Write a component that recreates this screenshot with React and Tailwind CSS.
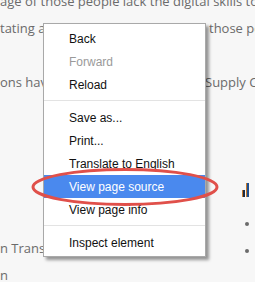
export default function App() {
  const item = "h-[23px] flex items-center pl-[25px] whitespace-nowrap";
  return (
    <div className="relative w-[255px] h-[282px] overflow-hidden bg-[#f7f7f7]">
      <div className="-mt-[12px] text-[13px] leading-[27px] text-[#6b6b6b] font-['Open_Sans',sans-serif] whitespace-nowrap">
        <div className="h-[27px] overflow-hidden">age of those people lack the digital skills to</div>
        <div className="h-[27px] flex overflow-hidden">
          <span className="w-[209px] shrink-0 overflow-hidden">tating a major shift in how</span>
          <span>those people</span>
        </div>
        <div className="h-[27px]" />
        <div className="h-[27px] flex overflow-hidden">
          <span className="w-[205px] shrink-0 overflow-hidden">ons have been given to</span>
          <span>Supply Chain</span>
        </div>
        <div className="flex">
          <div className="w-[241px] shrink-0 overflow-hidden pt-[139px]">
            <div className="h-[27px]">n Translation services</div>
            <div className="h-[27px]">n</div>
          </div>
          <div className="flex-1 flex flex-col">
            <svg className="mt-[87px]" width="10" height="14" viewBox="0 0 10 14">
              <rect x="1" y="7" width="3" height="7" fill="#1b2a44" />
              <rect x="1" y="7" width="1" height="7" fill="#c77a2a" />
              <rect x="5" y="0" width="3" height="14" fill="#1f4f8f" />
              <rect x="5" y="0" width="1" height="14" fill="#c77a2a" />
            </svg>
            <div className="mt-[13px] h-[27px] flex items-center">
              <div className="ml-[4px] w-[4px] h-[4px] rounded-full bg-[#6b6b6b]" />
            </div>
            <div className="h-[27px] flex items-center">
              <div className="ml-[4px] w-[4px] h-[4px] rounded-full bg-[#6b6b6b]" />
            </div>
          </div>
        </div>
      </div>

      <div className="absolute left-[43px] top-[23px] w-[163px] border border-[#a9a9a9] bg-white pt-[3px] pb-[2px] shadow-[3px_3px_3px_rgba(0,0,0,0.4)] text-[12px] text-[#111] font-['Liberation_Sans',sans-serif]">
        <div className={item}>Back</div>
        <div className={item + " text-[#9a9a9a]"}>Forward</div>
        <div className={item}>Reload</div>
        <div className="mt-[4px] mb-[5px] h-px bg-[#e3e3e3]" />
        <div className={item}>Save as...</div>
        <div className={item}>Print...</div>
        <div className={item}>Translate to English</div>
        <div className={item + " bg-[#4a89ee] text-white"}>View page source</div>
        <div className={item}>View page info</div>
        <div className="mt-[4px] mb-[5px] h-px bg-[#e3e3e3]" />
        <div className={item}>Inspect element</div>
      </div>

      <svg className="absolute left-[30px] top-[166px]" width="194" height="42" viewBox="0 0 194 42">
        <ellipse cx="95" cy="21" rx="92" ry="17.5" fill="none" stroke="#e0504a" strokeWidth="3" />
      </svg>
    </div>
  );
}
